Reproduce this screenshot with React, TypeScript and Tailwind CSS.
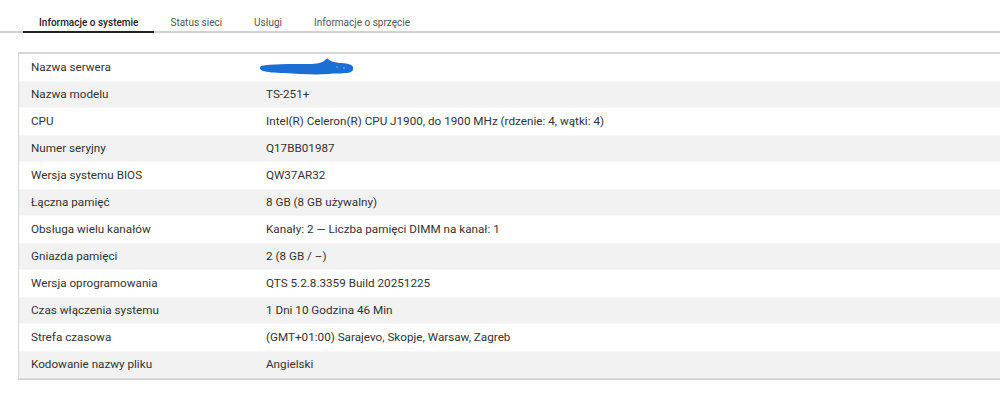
const tabs = ["Informacje o systemie", "Status sieci", "Usługi", "Informacje o sprzęcie"];

const rows: [string, string][] = [
  ["Nazwa serwera", ""],
  ["Nazwa modelu", "TS-251+"],
  ["CPU", "Intel(R) Celeron(R) CPU J1900, do 1900 MHz (rdzenie: 4, wątki: 4)"],
  ["Numer seryjny", "Q17BB01987"],
  ["Wersja systemu BIOS", "QW37AR32"],
  ["Łączna pamięć", "8 GB (8 GB używalny)"],
  ["Obsługa wielu kanałów", "Kanały: 2 — Liczba pamięci DIMM na kanał: 1"],
  ["Gniazda pamięci", "2 (8 GB / –)"],
  ["Wersja oprogramowania", "QTS 5.2.8.3359 Build 20251225"],
  ["Czas włączenia systemu", "1 Dni 10 Godzina 46 Min"],
  ["Strefa czasowa", "(GMT+01:00) Sarajevo, Skopje, Warsaw, Zagreb"],
  ["Kodowanie nazwy pliku", "Angielski"],
];

// blue marker scribble that hides the server name
function Scribble() {
  return (
    <svg width="96" height="20" viewBox="0 0 96 20" className="-ml-[7px] mt-[1px]">
      <path
        d="M2 8 C12 6 30 6 50 6 C58 6 62 5 65 3 C67 1 68 0 69 1 C71 3 74 4 80 5 C87 5 93 6 94 9 C95 13 92 15 86 15 C80 16 76 15 70 16 C55 17 40 16 25 15 C15 15 8 14 4 13 C1 12 0 10 2 8 Z"
        fill="#1b6fd4"
      />
      <circle cx="78" cy="9" r="0.9" fill="#5a9ae6" />
      <circle cx="85" cy="10" r="0.9" fill="#5a9ae6" />
    </svg>
  );
}

export default function App() {
  return (
    <div className="h-[403px] w-[1000px] overflow-hidden bg-white font-['Roboto',sans-serif] text-[#333]">
      {/* Tabs */}
      <div className="flex border-b-2 border-[#d2d2d2] pt-[16px] pl-[23px]">
        {tabs.map((t, i) => (
          <div
            key={t}
            className={
              i === 0
                ? "-mb-[2px] border-b-2 border-[#222] px-4 pb-[2px] text-[10px] font-medium leading-[13px] text-[#222]"
                : "-mb-[2px] border-b-2 border-transparent px-4 pb-[2px] text-[10px] leading-[13px] text-[#555]"
            }
          >
            {t}
          </div>
        ))}
      </div>

      {/* Table */}
      <div className="ml-[18px] mt-[19px] w-[1000px] border-t-2 border-b-2 border-l border-[#d7d7d7]">
        {rows.map(([label, value], i) => (
          <div
            key={label}
            className={
              i % 2 === 1
                ? "flex h-[27px] items-center border-y border-[#f7f7f7] bg-[#f2f2f2] text-[11.7px]"
                : "flex h-[27px] items-center bg-white text-[11.7px]"
            }
          >
            <div className="w-[247px] pl-[12px]">{label}</div>
            <div>{i === 0 ? <Scribble /> : value}</div>
          </div>
        ))}
      </div>
    </div>
  );
}
